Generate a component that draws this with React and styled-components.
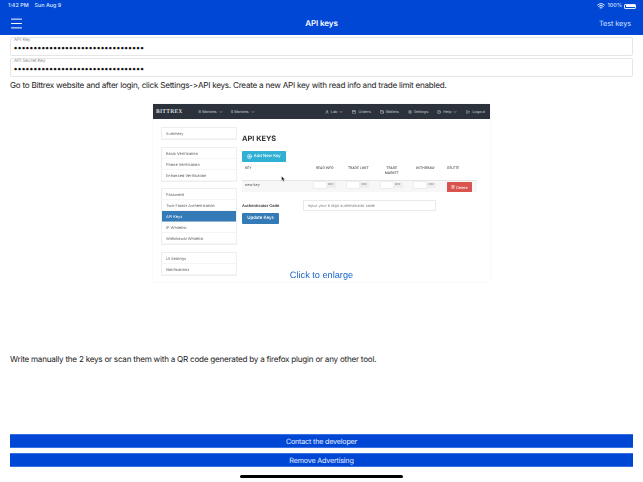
import React from "react";
import styled, { createGlobalStyle } from "styled-components";
import { Menu, Wifi, ChevronDown, Calendar, Wallet, Settings, CircleHelp, LogOut, User, Trash2, PlusCircle } from "lucide-react";

const BLUE = "#0047d6";

const GlobalStyle = createGlobalStyle`
  html, body { margin: 0; padding: 0; background: #fff; }
  body {
    font-family: Inter, "Liberation Sans", sans-serif;
    color: #222;
    text-rendering: geometricPrecision;
  }
`;

const MASKED = "•".repeat(33);

const Field = ({ label }) => (
  <FieldBox>
    <FieldLabel>{label}</FieldLabel>
    <FieldValue>{MASKED}</FieldValue>
  </FieldBox>
);

const SideGroup = ({ items, active }) => (
  <SideBox>
    {items.map((item) => (
      <SideRow key={item} $active={item === active}>
        {item}
      </SideRow>
    ))}
  </SideBox>
);

const TopLink = ({ icon: Icon, children, caret }) => (
  <TopItem>
    {Icon && <Icon size={4} strokeWidth={2.5} />}
    {children}
    {caret && <ChevronDown size={4} strokeWidth={3} />}
  </TopItem>
);

const Toggle = () => (
  <ToggleWrap>
    <ToggleBlank />
    <ToggleOff>OFF</ToggleOff>
  </ToggleWrap>
);

const BittrexShot = () => (
  <Shot>
    <ShotInner>
      <TopBar>
        <Brand>BITTREX</Brand>
        <TopLink caret>B Markets</TopLink>
        <TopLink caret>$ Markets</TopLink>
        <TopRight>
          <TopLink icon={User} caret>Lab</TopLink>
          <TopLink icon={Calendar}>Orders</TopLink>
          <TopLink icon={Wallet}>Wallets</TopLink>
          <TopLink icon={Settings}>Settings</TopLink>
          <TopLink icon={CircleHelp} caret>Help</TopLink>
          <TopLink icon={LogOut}>Logout</TopLink>
        </TopRight>
      </TopBar>
      <ShotBody>
        <Sidebar>
          <SideGroup items={["Summary"]} />
          <SideGroup items={["Basic Verification", "Phone Verification", "Enhanced Verification"]} />
          <SideGroup
            items={["Password", "Two-Factor Authentication", "API Keys", "IP Whitelist", "Withdrawal Whitelist"]}
            active="API Keys"
          />
          <SideGroup items={["UI Settings", "Notifications"]} />
        </Sidebar>
        <Main>
          <MainTitle>API KEYS</MainTitle>
          <AddButton>
            <PlusCircle size={5} strokeWidth={3} />
            Add New Key
          </AddButton>
          <TableHead>
            <HeadCell $align="left">KEY</HeadCell>
            <HeadCell>READ INFO</HeadCell>
            <HeadCell>TRADE LIMIT</HeadCell>
            <HeadCell>
              TRADE
              <br />
              MARKET
            </HeadCell>
            <HeadCell>WITHDRAW</HeadCell>
            <HeadCell $align="left">DELETE</HeadCell>
          </TableHead>
          <TableRow>
            <KeyName>new key</KeyName>
            <Toggle />
            <Toggle />
            <Toggle />
            <Toggle />
            <DeleteButton>
              <Trash2 size={4} strokeWidth={2.5} />
              Delete
            </DeleteButton>
          </TableRow>
          <AuthRow>
            <AuthLabel>Authenticator Code</AuthLabel>
            <AuthInput>Input your 6 digit authenticator code</AuthInput>
          </AuthRow>
          <UpdateButton>Update Keys</UpdateButton>
        </Main>
      </ShotBody>
    </ShotInner>
    <Cursor viewBox="0 0 8 11" aria-hidden="true">
      <path d="M1 0.5 L1 8.5 L3 6.8 L4.4 10 L5.8 9.4 L4.4 6.4 L7 6.2 Z" fill="#111" stroke="#fff" strokeWidth="0.5" />
    </Cursor>
    <EnlargeLink>Click to enlarge</EnlargeLink>
  </Shot>
);

export default function App() {
  return (
    <Page>
      <GlobalStyle />
      <Header>
        <StatusBar>
          <StatusLeft>
            <span>1:42 PM</span>
            <span>Sun Aug 9</span>
          </StatusLeft>
          <StatusRight>
            <Wifi size={8} strokeWidth={3} />
            <span>100%</span>
            <Battery>
              <BatteryFill />
            </Battery>
          </StatusRight>
        </StatusBar>
        <NavBar>
          <MenuButton>
            <Menu size={15} strokeWidth={1.6} />
          </MenuButton>
          <NavTitle>API keys</NavTitle>
          <NavAction>Test keys</NavAction>
        </NavBar>
      </Header>
      <Content>
        <Fields>
          <Field label="API Key" />
          <Field label="API Secret Key" />
        </Fields>
        <Paragraph>
          Go to Bittrex website and after login, click Settings-&gt;API keys. Create a new API key with read info and
          trade limit enabled.
        </Paragraph>
        <BittrexShot />
        <SecondParagraph>
          Write manually the 2 keys or scan them with a QR code generated by a firefox plugin or any other tool.
        </SecondParagraph>
      </Content>
      <Actions>
        <ActionButton>Contact the developer</ActionButton>
        <ActionButton>Remove Advertising</ActionButton>
      </Actions>
      <HomeBar />
    </Page>
  );
}

const Page = styled.div`
  width: 643px;
  height: 482px;
  overflow: hidden;
  display: flex;
  flex-direction: column;
  background: #fff;
`;

const Header = styled.header`
  height: 35px;
  background: ${BLUE};
  color: #fff;
  display: flex;
  flex-direction: column;
`;

const StatusBar = styled.div`
  height: 12px;
  padding: 0 7px 0 8px;
  display: flex;
  align-items: center;
  justify-content: space-between;
  font-size: 5.4px;
  font-weight: 500;
  color: #dfe8fb;
`;

const StatusLeft = styled.div`
  display: flex;
  gap: 6px;
`;

const StatusRight = styled.div`
  display: flex;
  align-items: center;
  gap: 2px;
`;

const Battery = styled.div`
  width: 12px;
  height: 5px;
  border-radius: 1px;
  padding: 0.5px;
  box-sizing: border-box;
  border: 0.5px solid #dfe8fb;
`;

const BatteryFill = styled.div`
  width: 100%;
  height: 100%;
  background: #fff;
`;

const NavBar = styled.div`
  flex: 1;
  padding: 0 12px 1px 9px;
  display: flex;
  align-items: center;
  justify-content: space-between;
  position: relative;
`;

const MenuButton = styled.div`
  display: flex;
  color: #fff;
`;

const NavTitle = styled.div`
  position: absolute;
  left: 0;
  right: 0;
  text-align: center;
  font-size: 8px;
  font-weight: 600;
  letter-spacing: -0.1px;
`;

const NavAction = styled.div`
  font-size: 7.4px;
  letter-spacing: -0.1px;
  color: #d5e1fa;
`;

const Content = styled.main`
  flex: 1;
  padding: 2px 10px 0;
  display: flex;
  flex-direction: column;
`;

const Fields = styled.div`
  display: flex;
  flex-direction: column;
  gap: 2px;
`;

const FieldBox = styled.div`
  height: 19px;
  box-sizing: border-box;
  border: 1px solid #e6e6e6;
  border-radius: 2px;
  padding: 0 3px;
  background: #fff;
`;

const FieldLabel = styled.div`
  font-size: 4.5px;
  line-height: 6px;
  color: #8a8a8a;
`;

const FieldValue = styled.div`
  font-family: "Liberation Sans", sans-serif;
  font-size: 9px;
  line-height: 9px;
  letter-spacing: 0.8px;
  color: #111;
  font-weight: 700;
`;

const Paragraph = styled.p`
  margin: 2px 0 0;
  font-size: 8.1px;
  letter-spacing: -0.235px;
  line-height: 12px;
  color: #1c1c1c;
`;

const SecondParagraph = styled(Paragraph)`
  margin: 71px 0 0;
`;

const Shot = styled.div`
  position: relative;
  align-self: center;
  width: 337px;
  height: 178px;
  margin-top: 13px;
  flex: none;
  background: #fff;
  box-shadow: 0 0 0 0.5px #f6f6f6;
`;

const ShotInner = styled.div`
  height: 100%;
  display: flex;
  flex-direction: column;
  filter: blur(0.25px);
`;

const TopBar = styled.div`
  height: 15px;
  background: #2b323b;
  color: #c9cdd2;
  display: flex;
  align-items: center;
  padding: 0 5px 0 3px;
  font-size: 3.8px;
  gap: 8px;
`;

const Brand = styled.div`
  font-family: "Liberation Serif", serif;
  font-size: 5.6px;
  font-weight: 700;
  letter-spacing: 0.2px;
  margin-right: 8px;
  color: #d7dadd;
`;

const TopRight = styled.div`
  margin-left: auto;
  display: flex;
  gap: 9px;
`;

const TopItem = styled.div`
  display: flex;
  align-items: center;
  gap: 2px;
`;

const ShotBody = styled.div`
  flex: 1;
  display: flex;
  padding: 8px 12px 0 8px;
  gap: 4px;
`;

const Sidebar = styled.div`
  width: 77px;
  display: flex;
  flex-direction: column;
  gap: 6.5px;
`;

const SideBox = styled.div`
  border: 1px solid #eeeeee;
`;

const SideRow = styled.div`
  height: 11px;
  box-sizing: border-box;
  padding-left: 4px;
  font-size: 3.9px;
  line-height: 11px;
  color: ${(p) => (p.$active ? "#fff" : "#666")};
  background: ${(p) => (p.$active ? "#337ab7" : "#fff")};
  box-shadow: inset 0 -0.5px 0 #eee;
`;

const Main = styled.div`
  flex: 1;
  padding: 0 1px;
  display: flex;
  flex-direction: column;
  align-items: flex-start;
`;

const MainTitle = styled.div`
  font-size: 7.4px;
  font-weight: 700;
  color: #333;
  margin-top: 7px;
  line-height: 10px;
`;

const AddButton = styled.div`
  margin-top: 7px;
  width: 44px;
  height: 11px;
  display: flex;
  align-items: center;
  justify-content: center;
  gap: 1.5px;
  background: #31b0d5;
  color: #fff;
  border-radius: 1px;
  font-size: 4.2px;
  font-weight: 500;
`;

const tableColumns = "66px repeat(4, 33.5px) 35px";

const TableHead = styled.div`
  align-self: stretch;
  display: grid;
  grid-template-columns: ${tableColumns};
  margin-top: 4px;
  height: 15px;
  box-sizing: border-box;
  border-bottom: 1px solid #e6e6e6;
  font-size: 3.3px;
  line-height: 5px;
  color: #555;
  font-weight: 500;
`;

const HeadCell = styled.div`
  text-align: ${(p) => p.$align || "center"};
  padding-left: ${(p) => (p.$align ? "3px" : "0")};
  &:last-child {
    padding-left: 5px;
  }
`;

const TableRow = styled.div`
  align-self: stretch;
  display: grid;
  grid-template-columns: ${tableColumns};
  align-items: start;
  height: 11px;
  background: #f7f7f7;
`;

const KeyName = styled.div`
  font-size: 3.8px;
  line-height: 6px;
  color: #555;
  padding: 1px 0 0 3px;
`;

const ToggleWrap = styled.div`
  justify-self: center;
  display: flex;
  width: 22px;
  height: 5.5px;
  margin-top: 1px;
  font-size: 2.8px;
  line-height: 5.5px;
  color: #777;
`;

const ToggleBlank = styled.div`
  flex: 1;
  background: #fff;
  box-shadow: 0 0 0 0.5px #e3e3e3;
`;

const ToggleOff = styled.div`
  width: 10px;
  text-align: center;
  background: #eeeeee;
`;

const DeleteButton = styled.div`
  justify-self: center;
  width: 25px;
  height: 10px;
  margin-top: 1px;
  background: #d9534f;
  color: #fff;
  font-size: 3.8px;
  border-radius: 0.5px;
  display: flex;
  align-items: center;
  justify-content: center;
  gap: 1px;
`;

const AuthRow = styled.div`
  display: flex;
  align-items: center;
  gap: 5px;
  margin-top: 8px;
`;

const AuthLabel = styled.div`
  width: 56px;
  font-size: 3.9px;
  font-weight: 700;
  color: #444;
`;

const AuthInput = styled.div`
  width: 133px;
  height: 11px;
  box-sizing: border-box;
  border: 1px solid #eaeaea;
  padding-left: 4px;
  font-size: 3.9px;
  line-height: 9px;
  color: #888;
`;

const UpdateButton = styled.div`
  margin-top: 2px;
  width: 37px;
  height: 11px;
  background: #337ab7;
  color: #fff;
  border-radius: 1px;
  font-size: 4.4px;
  font-weight: 500;
  line-height: 11px;
  text-align: center;
`;

const Cursor = styled.svg`
  position: absolute;
  left: 128px;
  top: 72px;
  width: 4.5px;
  height: 6px;
`;

const EnlargeLink = styled.div`
  position: absolute;
  left: 0;
  right: 0;
  bottom: 1px;
  text-align: center;
  font-family: "Liberation Sans", sans-serif;
  font-size: 9.2px;
  line-height: 12px;
  color: #1764c8;
`;

const Actions = styled.div`
  padding: 0 10px;
  display: flex;
  flex-direction: column;
  gap: 5px;
`;

const ActionButton = styled.div`
  height: 14px;
  background: ${BLUE};
  box-shadow: inset 0 0.5px 0 #6d9cf0, inset 0 -0.5px 0 #6d9cf0;
  color: #e8effd;
  text-align: center;
  font-size: 7.2px;
  letter-spacing: -0.2px;
  line-height: 15px;
`;

const HomeBar = styled.div`
  width: 163px;
  height: 3px;
  border-radius: 2px;
  background: #000;
  align-self: center;
  margin: 8px 0 4px;
`;
